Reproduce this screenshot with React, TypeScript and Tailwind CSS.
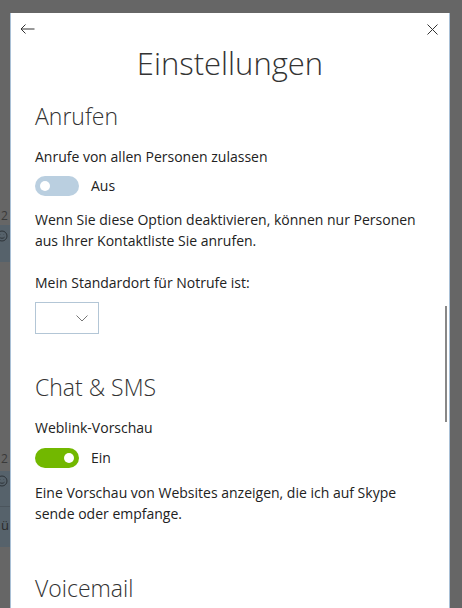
export default function App() {
  return (
    <div className="w-[462px] h-[608px] bg-[#666666] flex overflow-hidden font-['Open_Sans',sans-serif]">
      {/* chat list peeking out on the left */}
      <div className="w-[10px] shrink-0 flex flex-col overflow-hidden whitespace-nowrap">
        <div className="h-[209px] shrink-0" />
        <div className="h-[14px] shrink-0 pl-[1px] text-[12px] leading-[14px] text-[#3a3a3a]">2</div>
        <div className="h-[2px] shrink-0" />
        <div className="h-[37px] shrink-0 bg-[#56626b] pt-[5px]">
          <Smiley />
        </div>
        <div className="h-[190px] shrink-0" />
        <div className="h-[14px] shrink-0 pl-[1px] text-[12px] leading-[14px] text-[#3a3a3a]">2</div>
        <div className="h-[5px] shrink-0" />
        <div className="h-[36px] shrink-0 bg-[#56626b] pt-[4px] border-b border-[#4b555d]">
          <Smiley />
        </div>
        <div className="h-[40px] shrink-0 bg-[#56626b] pl-[1px] pt-[9px] text-[13px] leading-[18px] text-[#2a2a2a]">ü</div>
      </div>

      {/* settings panel */}
      <div className="w-[440px] shrink-0 mt-[13px] bg-white border-x border-[#a9c0d6] relative flex flex-col text-[#222]">
        <div className="h-[30px] shrink-0 flex justify-between items-start pt-[11px] pl-[9px] pr-[11px]">
          <svg width="15" height="10" viewBox="0 0 15 10" fill="none" stroke="#333" strokeWidth="1">
            <path d="M1 5H14.5M1 5L5.5 0.5M1 5L5.5 9.5" />
          </svg>
          <svg width="11" height="11" viewBox="0 0 11 11" fill="none" stroke="#333" strokeWidth="1">
            <path d="M0.5 0.5L10.5 10.5M10.5 0.5L0.5 10.5" />
          </svg>
        </div>

        <h1 className="text-center text-[31px] leading-[40px] font-light text-[#333]">Einstellungen</h1>

        <div className="px-[24px] flex flex-col">
          <h2 className="mt-[17px] text-[23px] leading-[32px] font-light text-[#333]">Anrufen</h2>
          <p className="mt-[15px] text-[14px] leading-[20px]">Anrufe von allen Personen zulassen</p>
          <div className="mt-[9px] flex items-center gap-[12px]">
            <div className="w-[44px] h-[20px] rounded-full bg-[#bacfe0] flex items-center">
              <div className="ml-[5px] w-[10px] h-[10px] rounded-full bg-white" />
            </div>
            <span className="text-[14px] leading-[20px]">Aus</span>
          </div>
          <p className="mt-[13px] text-[14px] leading-[21px]">
            Wenn Sie diese Option deaktivieren, können nur Personen aus Ihrer Kontaktliste Sie anrufen.
          </p>
          <p className="mt-[22px] text-[14px] leading-[20px]">Mein Standardort für Notrufe ist:</p>
          <div className="mt-[9px] w-[64px] h-[32px] border border-[#b3c6d6] flex items-center justify-end pr-[10px]">
            <svg width="12" height="7" viewBox="0 0 12 7" fill="none" stroke="#777" strokeWidth="1">
              <path d="M0.5 0.5L6 6L11.5 0.5" />
            </svg>
          </div>

          <h2 className="mt-[37px] text-[23px] leading-[32px] font-light text-[#333]">Chat &amp; SMS</h2>
          <p className="mt-[15px] text-[14px] leading-[20px]">Weblink-Vorschau</p>
          <div className="mt-[10px] flex items-center gap-[12px]">
            <div className="w-[44px] h-[20px] rounded-full bg-[#72b800] flex items-center justify-end">
              <div className="mr-[5px] w-[10px] h-[10px] rounded-full bg-white" />
            </div>
            <span className="text-[14px] leading-[20px]">Ein</span>
          </div>
          <p className="mt-[14px] text-[14px] leading-[21px]">
            Eine Vorschau von Websites anzeigen, die ich auf Skype sende oder empfange.
          </p>

          <h2 className="mt-[48px] text-[23px] leading-[32px] font-light text-[#333]">Voicemail</h2>
        </div>

        <div className="absolute right-[2px] top-[293px] w-[2px] h-[116px] bg-[#888]" />
      </div>
    </div>
  );
}

function Smiley() {
  return (
    <svg width="12" height="12" viewBox="0 0 12 12" fill="none" stroke="#2d3338" strokeWidth="1" className="-ml-[4px]">
      <circle cx="6" cy="6" r="5" />
      <path d="M3.5 7.2C4.5 8.6 7.5 8.6 8.5 7.2" />
      <path d="M4.3 4.5V4.8M7.7 4.5V4.8" />
    </svg>
  );
}
